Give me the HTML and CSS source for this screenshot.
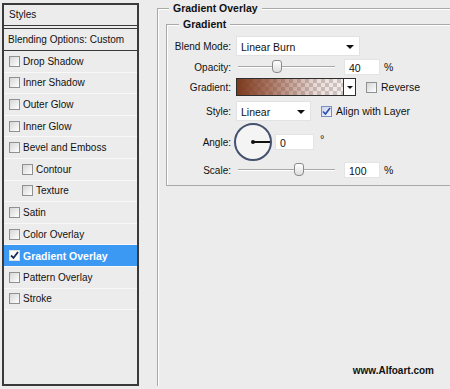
FILE: index.html
```html
<!DOCTYPE html>
<html lang="en">
<head>
  <meta charset="UTF-8">
  <title>Layer Style - Gradient Overlay</title>
  <link rel="stylesheet" href="styles.css">
</head>
<body>

  <div class="dialog">

    <div class="styles-panel">
      <div class="panel-head">Styles</div>
      <div class="panel-blend">Blending Options: Custom</div>
      <ul class="fx-list">
        <li><span class="check"></span>Drop Shadow</li>
        <li><span class="check"></span>Inner Shadow</li>
        <li><span class="check"></span>Outer Glow</li>
        <li><span class="check"></span>Inner Glow</li>
        <li><span class="check"></span>Bevel and Emboss</li>
        <li class="sub"><span class="check"></span>Contour</li>
        <li class="sub"><span class="check"></span>Texture</li>
        <li><span class="check"></span>Satin</li>
        <li><span class="check"></span>Color Overlay</li>
        <li class="active">
          <span class="check on">
            <svg width="9" height="9" viewBox="0 0 9 9"><path d="M1 4.5 L3.5 7 L8 1" fill="none" stroke="#1d2a5c" stroke-width="1.8"/></svg>
          </span>Gradient Overlay
        </li>
        <li><span class="check"></span>Pattern Overlay</li>
        <li><span class="check"></span>Stroke</li>
      </ul>
    </div>

    <div class="settings">
      <fieldset class="group outer">
        <legend>Gradient Overlay</legend>

        <fieldset class="group inner">
          <legend>Gradient</legend>

          <div class="row row-blend">
            <label>Blend Mode:</label>
            <div class="select blend-select">Linear Burn<span class="arrow"></span></div>
          </div>

          <div class="row">
            <label>Opacity:</label>
            <div class="slider"><span class="thumb" style="left: 34px"></span></div>
            <div class="field">40</div>
            <span class="unit">%</span>
          </div>

          <div class="row">
            <label>Gradient:</label>
            <div class="swatch"></div>
            <div class="swatch-arrow"><span class="arrow"></span></div>
            <span class="check box-reverse"></span>
            <span class="opt">Reverse</span>
          </div>

          <div class="row row-style">
            <label>Style:</label>
            <div class="select style-select">Linear<span class="arrow"></span></div>
            <span class="check blue box-align">
              <svg width="9" height="9" viewBox="0 0 9 9"><path d="M1 4.5 L3.5 7 L8 1" fill="none" stroke="#2a4bb0" stroke-width="1.6"/></svg>
            </span>
            <span class="opt">Align with Layer</span>
          </div>

          <div class="row row-angle">
            <label>Angle:</label>
            <div class="dial"><span class="hand"></span></div>
            <div class="field angle-field">0</div>
            <span class="degree">°</span>
          </div>

          <div class="row row-scale">
            <label>Scale:</label>
            <div class="slider"><span class="thumb" style="left: 56px"></span></div>
            <div class="field">100</div>
            <span class="unit">%</span>
          </div>
        </fieldset>

        <div class="credit">www.Alfoart.com</div>
      </fieldset>
    </div>

  </div>

</body>
</html>
```

FILE: styles.css
```css
body {
  margin: 0;
  background-color: #ececec;
  font-family: "Liberation Sans", Arial, sans-serif;
  font-size: 10px;
  color: #111;
  overflow: hidden;
}

.dialog {
  display: flex;
  padding: 3px 0 0 2px;
  height: 386px;
  box-sizing: border-box;
}

/* left list of effects */

.styles-panel {
  width: 137px;
  height: 383px;
  box-sizing: border-box;
  border: 2px solid #3a3a3a;
  background-color: #ececec;
}

.panel-head {
  height: 20px;
  line-height: 20px;
  padding-left: 5px;
  border-bottom: 4px double #3a3a3a;
}

.panel-blend {
  height: 21px;
  line-height: 21px;
  padding-left: 4px;
  border-bottom: 1px solid #3a3a3a;
}

.fx-list {
  list-style: none;
  margin: 0;
  padding: 0;
}

.fx-list li {
  display: flex;
  align-items: center;
  height: 21.6px;
  box-sizing: border-box;
  padding-left: 5px;
  border-bottom: 1px solid #f8f8f8;
}

.fx-list li.sub {
  padding-left: 18px;
}

.fx-list li.active {
  background-color: #3b98f3;
  color: white;
  font-weight: bold;
  font-size: 10.5px;
}

.check {
  display: inline-flex;
  align-items: center;
  justify-content: center;
  width: 11px;
  height: 11px;
  box-sizing: border-box;
  margin-right: 3px;
  border: 1px solid #8f9090;
  background: linear-gradient(135deg, #d6d6d6, #ffffff);
}

.check.on {
  background: #ffffff;
  border-color: #e0e0e0;
}

.check.blue {
  border-color: #7a8fc0;
  background: linear-gradient(135deg, #c8d4ee, #f4f7ff);
}

/* right side settings */

.settings {
  flex: 1;
  margin-left: 18px;
}

.group {
  margin: 0;
  min-width: 0;
  border: 1px solid #a9a9a9;
  box-shadow: inset 1px 1px 0 #ffffff;
}

.group legend {
  padding: 0 4px;
  margin-left: 3px;
  line-height: 10px;
  font-weight: bold;
  font-size: 10.5px;
  background-color: #ececec;
}

.outer {
  display: flex;
  flex-direction: column;
  height: 384px;
  box-sizing: border-box;
  border-right: none;
  padding: 6px 0 10px 8px;
}

.inner {
  border-right: none;
  padding: 6px 0 6px 0;
}

.inner legend {
  margin-left: 12px;
}

.row {
  display: flex;
  align-items: center;
  height: 20px;
}

.row label {
  width: 64px;
  margin-right: 5px;
  text-align: right;
}

.row-blend {
  height: 22px;
}

.row-style {
  height: 24px;
  margin-top: 2px;
}

.row-angle {
  height: 38px;
}

.row-scale {
  height: 18px;
}

.select {
  position: relative;
  height: 20px;
  line-height: 20px;
  box-sizing: border-box;
  padding-left: 4px;
  background-color: #ffffff;
  border: 1px solid #e2e2e2;
  font-size: 10.5px;
}

.select .arrow {
  position: absolute;
  right: 5px;
  top: 8px;
}

.arrow {
  width: 0;
  height: 0;
  border-left: 4px solid transparent;
  border-right: 4px solid transparent;
  border-top: 4px solid #111;
}

.blend-select {
  width: 124px;
}

.style-select {
  width: 75px;
}

.slider {
  position: relative;
  width: 97px;
  height: 2px;
  margin-left: 2px;
  border-top: 1px solid #a8a8a8;
  border-bottom: 1px solid #ffffff;
  box-sizing: border-box;
}

.thumb {
  position: absolute;
  top: -7px;
  width: 8px;
  height: 11px;
  border: 1px solid #8a8a8a;
  border-radius: 3px 3px 4px 4px;
  background: linear-gradient(#ffffff, #dedede);
}

.field {
  width: 36px;
  height: 16px;
  line-height: 16px;
  box-sizing: border-box;
  margin-left: 9px;
  padding-left: 4px;
  background-color: #ffffff;
  border: 1px solid #e4e4e4;
  font-size: 10.5px;
}

.unit {
  margin-left: 4px;
  font-size: 10.5px;
}

.swatch {
  width: 108px;
  height: 18px;
  box-sizing: border-box;
  border: 1px solid #2e2e2e;
  background-color: #ffffff;
  background-image:
    linear-gradient(to right, #7b3a1d 0%, rgba(140, 70, 45, 0.75) 30%, rgba(170, 110, 95, 0.25) 75%, rgba(190, 140, 130, 0.15) 100%),
    linear-gradient(45deg, #cfcfcf 25%, transparent 25%, transparent 75%, #cfcfcf 75%),
    linear-gradient(45deg, #cfcfcf 25%, transparent 25%, transparent 75%, #cfcfcf 75%);
  background-size: 100% 100%, 8px 8px, 8px 8px;
  background-position: 0 0, 0 0, 4px 4px;
}

.swatch-arrow {
  display: flex;
  align-items: center;
  justify-content: center;
  width: 12px;
  height: 18px;
  box-sizing: border-box;
  border: 1px solid #2e2e2e;
  border-left: none;
  background-color: #ffffff;
}

.swatch-arrow .arrow {
  border-left-width: 3px;
  border-right-width: 3px;
  border-top-width: 3px;
}

.box-reverse {
  margin-left: 10px;
}

.box-align {
  margin-left: 10px;
}

.opt {
  margin-left: 1px;
  font-size: 10.5px;
}

.dial {
  position: relative;
  width: 38px;
  height: 38px;
  box-sizing: border-box;
  margin-left: -2px;
  border: 2px solid #44526e;
  border-radius: 50%;
  background-color: #f4f4f4;
}

.hand {
  position: absolute;
  left: 16px;
  top: 16px;
  width: 18px;
  height: 2px;
  background-color: #111;
}

.hand::before {
  content: "";
  position: absolute;
  left: -1px;
  top: -1px;
  width: 4px;
  height: 4px;
  border-radius: 50%;
  background-color: #111;
}

.angle-field {
  width: 39px;
  margin-left: 3px;
}

.degree {
  align-self: flex-start;
  margin-top: 10px;
  margin-left: 6px;
  font-size: 11px;
}

.credit {
  margin-top: auto;
  padding-right: 16px;
  text-align: right;
  font-family: Arial, "Liberation Sans", sans-serif;
  font-weight: bold;
  font-size: 10px;
  color: #111;
}
```
